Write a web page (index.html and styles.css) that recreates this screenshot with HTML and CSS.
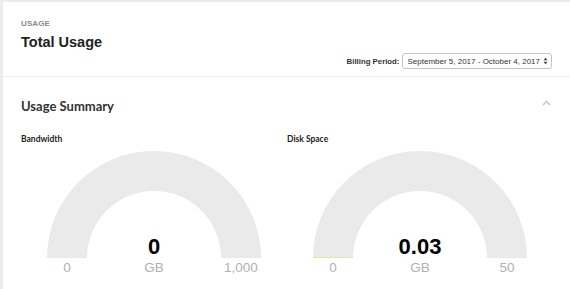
FILE: index.html
```html
<!DOCTYPE html>
<html lang="en">
<head>
  <meta charset="UTF-8">
  <title>Total Usage</title>
  <link rel="stylesheet" href="styles.css">
</head>
<body>
  <div class="card">
    <header class="usage-head">
      <div class="eyebrow">USAGE</div>
      <h1>Total Usage</h1>
      <div class="billing">
        <span class="billing-label">Billing Period:</span>
        <div class="select">
          <span>September 5, 2017 - October 4, 2017</span>
          <svg class="arrows" width="5" height="8" viewBox="0 0 5 8">
            <path d="M0.5 3.2 L2.5 0.8 L4.5 3.2 Z M0.5 4.8 L2.5 7.2 L4.5 4.8 Z" fill="#444"/>
          </svg>
        </div>
      </div>
    </header>

    <section class="summary">
      <div class="summary-head">
        <h2>Usage Summary</h2>
        <svg class="chevron" width="9" height="6" viewBox="0 0 9 6">
          <path d="M1 5 L4.5 1.5 L8 5" fill="none" stroke="#c8c8c8" stroke-width="1.6"/>
        </svg>
      </div>

      <div class="gauges">
        <div class="gauge-col">
          <h3>Bandwidth</h3>
          <div class="gauge">
            <div class="dial">
              <svg width="214" height="107" viewBox="0 0 214 107">
                <path d="M0 107 A107 107 0 0 1 214 107 L174 107 A67 67 0 0 0 40 107 Z" fill="#ebeaeb"/>
              </svg>
              <div class="value">0</div>
            </div>
            <div class="scale">
              <span>0</span>
              <span>GB</span>
              <span>1,000</span>
            </div>
          </div>
        </div>

        <div class="gauge-col">
          <h3>Disk Space</h3>
          <div class="gauge">
            <div class="dial">
              <svg width="214" height="107" viewBox="0 0 214 107">
                <path d="M0 107 A107 107 0 0 1 214 107 L174 107 A67 67 0 0 0 40 107 Z" fill="#ebeaeb"/>
                <path d="M0 107 L0 106.2 L40 106.5 L40 107 Z" fill="#d9e86a"/>
              </svg>
              <div class="value">0.03</div>
            </div>
            <div class="scale">
              <span>0</span>
              <span>GB</span>
              <span>50</span>
            </div>
          </div>
        </div>
      </div>
    </section>
  </div>
</body>
</html>
```

FILE: styles.css
```css
* {
  margin: 0;
  padding: 0;
  box-sizing: border-box;
}

body {
  background: #ececec;
  font-family: 'Liberation Sans', Arial, sans-serif;
  color: #222;
  overflow: hidden;
}

.card {
  margin: 2px 0 0 3px;
  background: #fff;
  min-height: 300px;
}

.usage-head {
  padding: 17px 18px 0 18px;
  height: 75px;
  border-bottom: 1px solid #efefef;
}

.eyebrow {
  font-size: 8px;
  font-weight: bold;
  color: #8a8a8a;
  letter-spacing: 0.1px;
  line-height: 10px;
}

h1 {
  font-size: 14.5px;
  font-weight: bold;
  color: #222;
  line-height: 18px;
  margin-top: 4px;
}

.billing {
  display: flex;
  justify-content: flex-end;
  align-items: center;
  gap: 3px;
  margin-top: 2px;
}

.billing-label {
  font-size: 7.8px;
  font-weight: bold;
  color: #333;
}

.select {
  display: flex;
  align-items: center;
  gap: 3px;
  height: 16px;
  padding: 0 3px 0 4px;
  border: 1px solid #c4c4c4;
  border-radius: 3px;
  font-size: 8px;
  color: #333;
  background: #fff;
}

.summary {
  padding: 0 18px;
}

.summary-head {
  display: flex;
  justify-content: space-between;
  align-items: center;
  padding-top: 14px;
  height: 56px;
}

h2 {
  font-family: Lato, sans-serif;
  font-size: 13px;
  font-weight: 700;
  color: #333;
  margin-top: -12px;
}

.chevron {
  margin-right: 1px;
  margin-top: -18px;
}

.gauges {
  display: grid;
  grid-template-columns: 266px 266px;
}

h3 {
  font-family: Lato, sans-serif;
  font-size: 8.5px;
  font-weight: 700;
  color: #222;
  line-height: 12px;
}

.gauge {
  width: 214px;
  margin: 6px auto 0 auto;
}

.dial {
  position: relative;
  height: 107px;
}

.dial svg {
  display: block;
}

.value {
  position: absolute;
  left: 0;
  right: 0;
  bottom: 0;
  text-align: center;
  font-size: 22px;
  font-weight: bold;
  color: #000;
  line-height: 22px;
}

.scale {
  display: grid;
  grid-template-columns: 40px 1fr 40px;
  text-align: center;
  font-size: 13.5px;
  color: #b0b0b0;
  line-height: 16px;
  margin-top: 2px;
}
```
